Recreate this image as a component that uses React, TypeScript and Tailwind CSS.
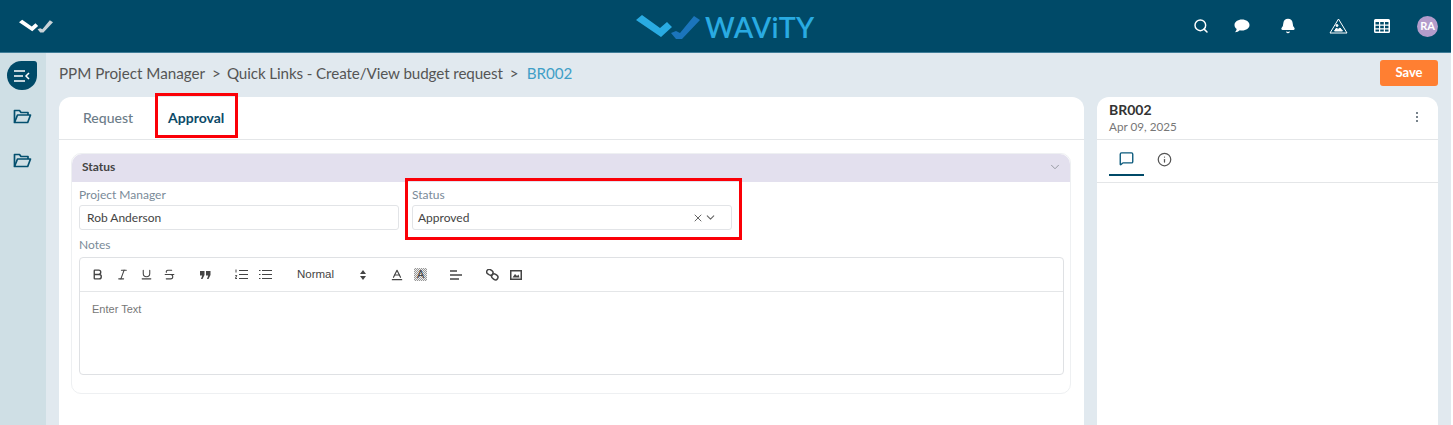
import { Baseline, Bell, Bold, ChevronDown, Info, Italic, MessageSquare, Search, Strikethrough, Underline, X } from "lucide-react";

function FolderIcon() {
  return (
    <svg width="19" height="15" viewBox="0 0 19 15" fill="none" stroke="#04506f" strokeWidth="1.7" strokeLinejoin="round">
      <path d="M1.500 13.500V1.500h5l1.500 2h7v2.500" />
      <path d="M1.500 13.500 4.500 6h13l-2.800 7.500z" />
    </svg>
  );
}

function LogoMark({ main, second, className }: { main: string; second: string; className: string }) {
  return (
    <svg viewBox="0 0 64 26" className={className}>
      <path d="M0 6 6 1 24 14 31 8 36 13 25 23z" fill={main} />
      <path d="M35 19 40 17 44 19 58 2 64 6 46 25 40 25z" fill={second} />
    </svg>
  );
}

export default function App() {
  return (
    <div className="flex h-[425px] w-[1451px] flex-col overflow-hidden bg-[#e1e9ef] font-['Lato',sans-serif]">
      <header className="relative flex h-[53px] shrink-0 items-center justify-between border-b border-[#3f7d98] bg-[#004a68] pl-[19px] pr-[13px]">
        <LogoMark main="#ffffff" second="#c9d3d8" className="h-[14px] w-[34px]" />
        <div className="absolute left-[636px] top-[12px] flex items-center gap-[5px]">
          <LogoMark main="#29abe2" second="#1b75bc" className="h-[26px] w-[64px]" />
          <span className="text-[28.500px] font-semibold leading-[30px] tracking-[0.2px] text-[#29abe2]">WAViTY</span>
        </div>
        <div className="flex items-center">
          <Search size={16} strokeWidth={2.2} className="mr-[25px] text-white" />
          <svg width="16" height="14" viewBox="0 0 16 14" className="mr-[30px]" fill="#fff">
            <path d="M8 .5c4.200 0 7.500 2.400 7.500 5.500S12.200 11.500 8 11.500c-.8 0-1.500-.1-2.200-.2C4.600 12.600 2.800 13.300 1 13.300c.9-.8 1.500-1.900 1.700-3.200C1.300 9.100.5 7.600.5 6 .5 2.900 3.800.5 8 .5z" />
          </svg>
          <Bell size={16} fill="#fff" strokeWidth={2} className="mr-[33px] text-white" />
          <svg width="19" height="16" viewBox="0 0 19 16" className="mr-[26px]" fill="none" stroke="#fff" strokeWidth="1">
            <path d="M9.500 1 18 15H1z" />
            <circle cx="8" cy="7.500" r="1" fill="#fff" />
            <path d="M5.500 13l2-3 1.500 1.500 2-1.500 2.500 3z" fill="#fff" />
          </svg>
          <svg width="16" height="14" viewBox="0 0 16 14" className="mr-[27px]" fill="#fff">
            <path d="M1.500 0h13A1.500 1.500 0 0 1 16 1.500v11a1.500 1.500 0 0 1-1.500 1.500h-13A1.500 1.500 0 0 1 0 12.500v-11A1.500 1.500 0 0 1 1.500 0zM1.500 3v2.500h3.500V3zm4.700 0v2.500h3.600V3zM11 3v2.500h3.500V3zM1.500 6.700v2.600h3.500V6.700zm4.700 0v2.600h3.600V6.700zm4.800 0v2.600h3.500V6.700zM1.500 10.500v2h3.500v-2zm4.700 0v2h3.600v-2zm4.800 0v2h3.500v-2z" fillRule="evenodd" />
          </svg>
          <span className="flex h-[21px] w-[21px] items-center justify-center rounded-full bg-[#b39ccb] text-[11px] font-bold text-white">RA</span>
        </div>
      </header>

      <div className="flex min-h-0 flex-1">
        <aside className="flex w-[46px] shrink-0 flex-col items-center bg-[#cfdfe5] pt-[8px]">
          <button type="button" className="mr-[2px] flex h-[29px] w-[30px] items-center justify-center rounded-[15px] rounded-tr-[3px] bg-[#004a68]">
            <svg width="16" height="12" viewBox="0 0 16 12" fill="none" stroke="#fff" strokeWidth="1.500">
              <path d="M0 1h11M0 6h9M0 11h11M15 3l-3 3 3 3" />
            </svg>
          </button>
          <span className="mr-[2px] mt-[19px]"><FolderIcon /></span>
          <span className="mr-[2px] mt-[29px]"><FolderIcon /></span>
        </aside>

        <main className="min-w-0 flex-1 pl-[13px] pr-[13px]">
          <div className="flex h-[44px] items-center justify-between pb-[4px]">
            <div className="flex items-center text-[15.200px] text-[#555]">
              <span>PPM Project Manager</span>
              <span className="ml-[7px] mr-[6px]">&gt;</span>
              <span className="tracking-[-0.1px]">Quick Links - Create/View budget request</span>
              <span className="ml-[7px] mr-[8px]">&gt;</span>
              <span className="text-[#3f9fc7]">BR002</span>
            </div>
            <button type="button" className="h-[26px] w-[58px] rounded-[3px] bg-[#ff7f32] text-[13px] font-bold text-white">Save</button>
          </div>

          <div className="flex gap-[13px]">
            <section className="relative h-[400px] w-[1025px] shrink-0 rounded-t-[12px] bg-white">
              <div className="flex h-[43px] items-center border-b border-[#e4e6e8] pb-[2px] pl-[24px] text-[14px]">
                <span className="font-medium text-[#6b7c88]">Request</span>
                <span className="ml-[35px] font-bold text-[#0b4a68]">Approval</span>
              </div>
              <span className="absolute left-[96px] top-[-4px] h-[45px] w-[83px] border-[3px] border-[#fb0007]" />

              <div className="ml-[12px] mr-[13px] mt-[13px] h-[241px] rounded-[10px] border border-[#eef0f2]">
                <div className="flex h-[28px] items-center justify-between rounded-t-[10px] bg-[#e3e0ee] pb-[2px] pl-[10px] pr-[8px]">
                  <span className="text-[12px] font-bold text-[#444]">Status</span>
                  <ChevronDown size={14} strokeWidth={1.500} className="text-[#8a8f96]" />
                </div>
                <div className="pl-[7px] pr-[6px]">
                  <div className="flex gap-[13px] pt-[5px]">
                    <label className="w-[320px]">
                      <span className="block text-[12px] leading-[15px] text-[#7a8a98]">Project Manager</span>
                      <div className="mt-[3px] flex h-[25px] items-center rounded-[3px] border border-[#e2e4e7] px-[7px] text-[12px] text-[#444]">Rob Anderson</div>
                    </label>
                    <label className="relative w-[320px]">
                      <span className="block text-[12px] leading-[15px] text-[#7a8a98]">Status</span>
                      <div className="mt-[3px] flex h-[25px] items-center justify-between rounded-[3px] border border-[#e2e4e7] pl-[5px] pr-[14px] text-[12px] text-[#444]">
                        Approved
                        <span className="flex items-center text-[#666]">
                          <X size={12} />
                          <ChevronDown size={13} />
                        </span>
                      </div>
                      <span className="absolute left-[-7px] top-[-9px] h-[62px] w-[337px] border-[3px] border-[#fb0007]" />
                    </label>
                  </div>

                  <div className="mt-[7px] text-[12px] leading-[15px] text-[#7a8a98]">Notes</div>
                  <div className="mt-[5px] h-[118px] rounded-[4px] border border-[#dfe1e4]">
                    <div className="flex h-[34px] items-center border-b border-[#e4e6e8] pl-[11px] text-[#444]">
                      <Bold size={13} strokeWidth={2.500} />
                      <Italic size={13} strokeWidth={2} className="ml-[12px]" />
                      <Underline size={13} strokeWidth={2} className="ml-[11px]" />
                      <Strikethrough size={13} strokeWidth={2} className="ml-[10px]" />
                      <svg width="11" height="8" viewBox="0 0 11 8" fill="#444" className="ml-[24px]">
                        <path d="M0 0h4.500v4L2.500 8H1l1.200-3.500H0zM6 0h4.500v4l-2 4H7l1.200-3.500H6z" />
                      </svg>
                      <svg width="13" height="11" viewBox="0 0 13 11" stroke="#444" fill="none" className="ml-[24px]">
                        <path d="M4 1.500h9M4 5.500h9M4 9.500h9M1 .5v3M.3 6.500h1.500L.3 9.500H2" />
                      </svg>
                      <svg width="13" height="11" viewBox="0 0 13 11" stroke="#444" fill="none" className="ml-[11px]">
                        <path d="M3 1.500h10M3 5.500h10M3 9.500h10M0 1.500h1.500M0 5.500h1.500M0 9.500h1.500" />
                      </svg>
                      <span className="ml-[25px] font-['Liberation_Sans',sans-serif] text-[11.500px] text-[#444]">Normal</span>
                      <svg width="6" height="10" viewBox="0 0 6 10" fill="#444" className="ml-[26px]">
                        <path d="M3 0 6 4H0zM0 6h6L3 10z" />
                      </svg>
                      <Baseline size={14} strokeWidth={2} className="ml-[24px]" />
                      <span className="ml-[10px] h-[13px] w-[13px] bg-[repeating-conic-gradient(#999_0_25%,#eee_0_50%)] bg-[length:2px_2px] text-center font-['Liberation_Sans',sans-serif] text-[11px] leading-[13px] text-[#444]">A</span>
                      <svg width="12" height="10" viewBox="0 0 12 10" stroke="#444" strokeWidth="1.300" className="ml-[23px]">
                        <path d="M0 1h7M0 5h12M0 9h9" />
                      </svg>
                      <svg width="13" height="12" viewBox="0 0 13 12" stroke="#444" strokeWidth="1.500" fill="none" className="ml-[24px]">
                        <rect x="0.800" y="0.800" width="6.500" height="5" rx="2.500" transform="rotate(35 4 3)" />
                        <rect x="5.500" y="5.500" width="6.500" height="5" rx="2.500" transform="rotate(35 9 8)" />
                      </svg>
                      <svg width="12" height="10" viewBox="0 0 12 10" className="ml-[11px]" fill="#444">
                        <path fillRule="evenodd" d="M0 0h12v10H0zM1.500 1.500v7h9v-7z" />
                        <path d="M2.500 7.500 5 4l2 2 1.500-1.500 1 3z" />
                      </svg>
                    </div>
                    <div className="pl-[12px] pt-[9px] font-['Liberation_Sans',sans-serif] text-[11px] text-[#777]">Enter Text</div>
                  </div>
                </div>
              </div>
            </section>

            <section className="h-[400px] w-[341px] shrink-0 rounded-t-[12px] bg-white">
              <div className="flex h-[43px] items-start justify-between border-b border-[#e4e6e8] pl-[12px] pr-[20px] pt-[4px]">
                <div>
                  <div className="text-[14px] font-bold leading-[17px] text-[#333]">BR002</div>
                  <div className="mt-[1px] text-[11.700px] leading-[15px] text-[#777]">Apr 09, 2025</div>
                </div>
                <span className="mt-[11px] flex flex-col gap-[2px]">
                  <i className="h-[2px] w-[2px] rounded-full bg-[#4b5a66]" />
                  <i className="h-[2px] w-[2px] rounded-full bg-[#4b5a66]" />
                  <i className="h-[2px] w-[2px] rounded-full bg-[#4b5a66]" />
                </span>
              </div>
              <div className="flex h-[43px] items-stretch border-b border-[#e4e6e8] pl-[12px]">
                <span className="flex h-[36px] w-[35px] items-center justify-center border-b-2 border-[#004a68] pt-[2px]">
                  <MessageSquare size={15} strokeWidth={2.200} className="text-[#0b5a7c]" />
                </span>
                <span className="ml-[13px] flex h-[36px] items-center pt-[2px]">
                  <Info size={15} className="text-[#555]" />
                </span>
              </div>
            </section>
          </div>
        </main>
      </div>
    </div>
  );
}
